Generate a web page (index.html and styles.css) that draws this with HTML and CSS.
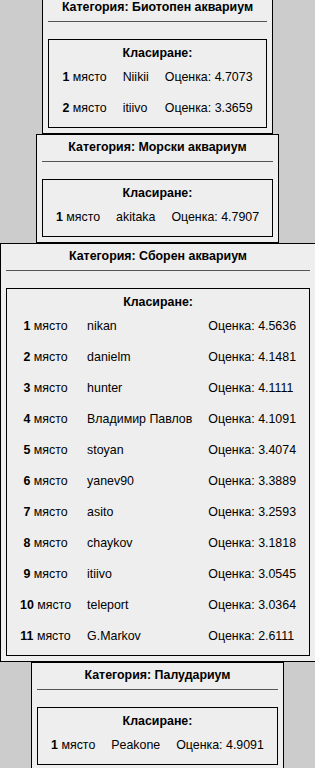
FILE: index.html
```html
<!DOCTYPE html>
<html lang="bg">
<head>
  <meta charset="UTF-8">
  <title>Класиране по категории</title>
  <link rel="stylesheet" href="styles.css">
</head>
<body>

  <div class="page">

    <section class="category">
      <h2 class="category-title">Категория: Биотопен аквариум</h2>
      <hr class="divider">
      <div class="ranking">
        <h3 class="ranking-title">Класиране:</h3>
        <table class="ranking-table">
          <tr><td class="place"><b>1</b> място</td><td>Niikii</td><td>Оценка: 4.7073</td></tr>
          <tr><td class="place"><b>2</b> място</td><td>itiivo</td><td>Оценка: 3.3659</td></tr>
        </table>
      </div>
    </section>

    <section class="category">
      <h2 class="category-title">Категория: Морски аквариум</h2>
      <hr class="divider">
      <div class="ranking">
        <h3 class="ranking-title">Класиране:</h3>
        <table class="ranking-table">
          <tr><td class="place"><b>1</b> място</td><td>akitaka</td><td>Оценка: 4.7907</td></tr>
        </table>
      </div>
    </section>

    <section class="category">
      <h2 class="category-title">Категория: Сборен аквариум</h2>
      <hr class="divider">
      <div class="ranking">
        <h3 class="ranking-title">Класиране:</h3>
        <table class="ranking-table">
          <tr><td class="place"><b>1</b> място</td><td>nikan</td><td>Оценка: 4.5636</td></tr>
          <tr><td class="place"><b>2</b> място</td><td>danielm</td><td>Оценка: 4.1481</td></tr>
          <tr><td class="place"><b>3</b> място</td><td>hunter</td><td>Оценка: 4.1111</td></tr>
          <tr><td class="place"><b>4</b> място</td><td>Владимир Павлов</td><td>Оценка: 4.1091</td></tr>
          <tr><td class="place"><b>5</b> място</td><td>stoyan</td><td>Оценка: 3.4074</td></tr>
          <tr><td class="place"><b>6</b> място</td><td>yanev90</td><td>Оценка: 3.3889</td></tr>
          <tr><td class="place"><b>7</b> място</td><td>asito</td><td>Оценка: 3.2593</td></tr>
          <tr><td class="place"><b>8</b> място</td><td>chaykov</td><td>Оценка: 3.1818</td></tr>
          <tr><td class="place"><b>9</b> място</td><td>itiivo</td><td>Оценка: 3.0545</td></tr>
          <tr><td class="place"><b>10</b> място</td><td>teleport</td><td>Оценка: 3.0364</td></tr>
          <tr><td class="place"><b>11</b> място</td><td>G.Markov</td><td>Оценка: 2.6111</td></tr>
        </table>
      </div>
    </section>

    <section class="category">
      <h2 class="category-title">Категория: Палудариум</h2>
      <hr class="divider">
      <div class="ranking">
        <h3 class="ranking-title">Класиране:</h3>
        <table class="ranking-table">
          <tr><td class="place"><b>1</b> място</td><td>Peakone</td><td>Оценка: 4.9091</td></tr>
        </table>
      </div>
    </section>

  </div>

</body>
</html>
```

FILE: styles.css
```css
body {
  margin: 0;
  background: #ccc;
  color: #000;
  font-family: 'Liberation Sans', Arial, sans-serif;
  font-size: 12.4px;
}

/* the list is shown scrolled a few pixels down */
.page {
  margin-top: -6px;
}

.category {
  width: fit-content;
  margin: 0 auto;
  padding: 5px;
  border: 1px solid #000;
  background: #eee;
}

.category-title {
  margin: 0;
  font-size: 12.4px;
  line-height: 15px;
  font-weight: bold;
  text-align: center;
}

.divider {
  height: 0;
  margin: 6px 0 17px;
  border: 0;
  border-top: 1px solid #555;
}

.ranking {
  padding: 6px 5px 4px;
  border: 1px solid #000;
}

.ranking-title {
  margin: 0;
  font-size: 12.4px;
  line-height: 15px;
  font-weight: bold;
  text-align: center;
}

.ranking-table {
  border-collapse: collapse;
}

.ranking-table td {
  height: 31px;
  padding: 0 8px;
  white-space: nowrap;
}

.ranking-table .place {
  text-align: center;
}
```
